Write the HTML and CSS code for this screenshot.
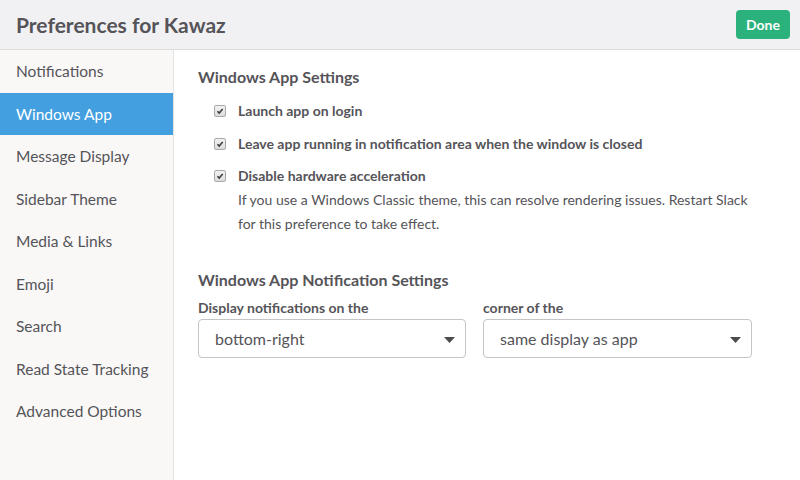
FILE: index.html
```html
<!DOCTYPE html>
<html>
<head>
<meta charset="utf-8">
<link rel="stylesheet" href="styles.css">
</head>
<body>
<div class="dialog">
  <header class="header">
    <h1 class="title">Preferences for Kawaz</h1>
    <button class="done">Done</button>
  </header>
  <div class="body">
    <nav class="sidebar">
      <div class="nav-item">Notifications</div>
      <div class="nav-item active">Windows App</div>
      <div class="nav-item">Message Display</div>
      <div class="nav-item">Sidebar Theme</div>
      <div class="nav-item">Media &amp; Links</div>
      <div class="nav-item">Emoji</div>
      <div class="nav-item">Search</div>
      <div class="nav-item">Read State Tracking</div>
      <div class="nav-item">Advanced Options</div>
    </nav>
    <main class="content">
      <h2 class="section-title">Windows App Settings</h2>
      <div class="options">
        <div class="option">
          <span class="check"><svg viewBox="0 0 12 12" width="12" height="12"><path d="M3 6.2 L5 8.4 L9.2 3.6" fill="none" stroke="#3a3a3a" stroke-width="1.8"/></svg></span>
          <div class="option-text"><div class="option-label">Launch app on login</div></div>
        </div>
        <div class="option">
          <span class="check"><svg viewBox="0 0 12 12" width="12" height="12"><path d="M3 6.2 L5 8.4 L9.2 3.6" fill="none" stroke="#3a3a3a" stroke-width="1.8"/></svg></span>
          <div class="option-text"><div class="option-label">Leave app running in notification area when the window is closed</div></div>
        </div>
        <div class="option">
          <span class="check"><svg viewBox="0 0 12 12" width="12" height="12"><path d="M3 6.2 L5 8.4 L9.2 3.6" fill="none" stroke="#3a3a3a" stroke-width="1.8"/></svg></span>
          <div class="option-text">
            <div class="option-label">Disable hardware acceleration</div>
            <div class="option-desc">If you use a Windows Classic theme, this can resolve rendering issues. Restart Slack for this preference to take effect.</div>
          </div>
        </div>
      </div>
      <h2 class="section-title second">Windows App Notification Settings</h2>
      <div class="selects">
        <div class="field">
          <label class="field-label">Display notifications on the</label>
          <div class="select"><span>bottom-right</span><svg class="caret" viewBox="0 0 11 6" width="11" height="6"><path d="M0 0 H11 L5.5 6 Z" fill="#4d4d4d"/></svg></div>
        </div>
        <div class="field">
          <label class="field-label">corner of the</label>
          <div class="select"><span>same display as app</span><svg class="caret" viewBox="0 0 11 6" width="11" height="6"><path d="M0 0 H11 L5.5 6 Z" fill="#4d4d4d"/></svg></div>
        </div>
      </div>
    </main>
  </div>
</div>
</body>
</html>
```

FILE: styles.css
```css
* { box-sizing: border-box; }
html, body { margin: 0; padding: 0; }
body {
  width: 800px;
  height: 480px;
  overflow: hidden;
  font-family: Lato, "Open Sans", sans-serif;
  color: #555459;
  background: #fff;
}
.dialog {
  display: flex;
  flex-direction: column;
  height: 480px;
}
.header {
  height: 50px;
  flex: none;
  display: flex;
  align-items: center;
  justify-content: space-between;
  padding: 0 10px 0 16px;
  background: #f1f1f3;
  border-bottom: 1px solid #dcdcdc;
}
.title {
  margin: 0;
  font-size: 21px;
  font-weight: 700;
  color: #555459;
}
.done {
  font-family: Lato, sans-serif;
  font-weight: 700;
  font-size: 14px;
  color: #fff;
  background: #2bb27c;
  border: none;
  border-radius: 4px;
  width: 54px;
  height: 29px;
  padding: 0;
}
.body {
  flex: 1;
  display: flex;
  min-height: 0;
}
.sidebar {
  width: 174px;
  flex: none;
  background: #f9f8f7;
  border-right: 1px solid #e3e3e3;
}
.nav-item {
  height: 42.5px;
  display: flex;
  align-items: center;
  padding-left: 16px;
  font-size: 15.5px;
  color: #555459;
}
.nav-item.active {
  background: #439fe0;
  color: #fff;
}
.content {
  flex: 1;
  padding: 17px 24px 0 24px;
}
.section-title {
  margin: 0;
  font-size: 16px;
  font-weight: 700;
  line-height: 20px;
  color: #555459;
}
.section-title.second {
  margin-top: 34px;
}
.options {
  padding-left: 16px;
  margin-top: 12px;
}
.option {
  display: flex;
  align-items: flex-start;
  margin-bottom: 8.5px;
}
.check {
  width: 12px;
  height: 12px;
  flex: none;
  margin-top: 6px;
  margin-right: 12px;
  border: 1px solid #a9a9a9;
  border-radius: 2px;
  background: linear-gradient(#f2f2f2, #dcdcdc);
  display: flex;
  align-items: center;
  justify-content: center;
}
.check svg { display: block; }
.option-label {
  font-size: 14px;
  font-weight: 700;
  line-height: 24px;
  color: #555459;
}
.option-desc {
  max-width: 516px;
  font-size: 14px;
  line-height: 24px;
  color: #555459;
}
.selects {
  display: grid;
  grid-template-columns: 268px 269px;
  column-gap: 17px;
  margin-top: 8px;
}
.field-label {
  display: block;
  font-size: 14px;
  font-weight: 700;
  line-height: 20px;
  margin-bottom: 1px;
}
.select {
  height: 39px;
  border: 1px solid #c5c5c5;
  border-radius: 4px;
  display: flex;
  align-items: center;
  justify-content: space-between;
  padding: 0 10px 0 16px;
  font-size: 16px;
  color: #555459;
  background: #fff;
}
.caret { display: block; margin-top: 2px; }
```
